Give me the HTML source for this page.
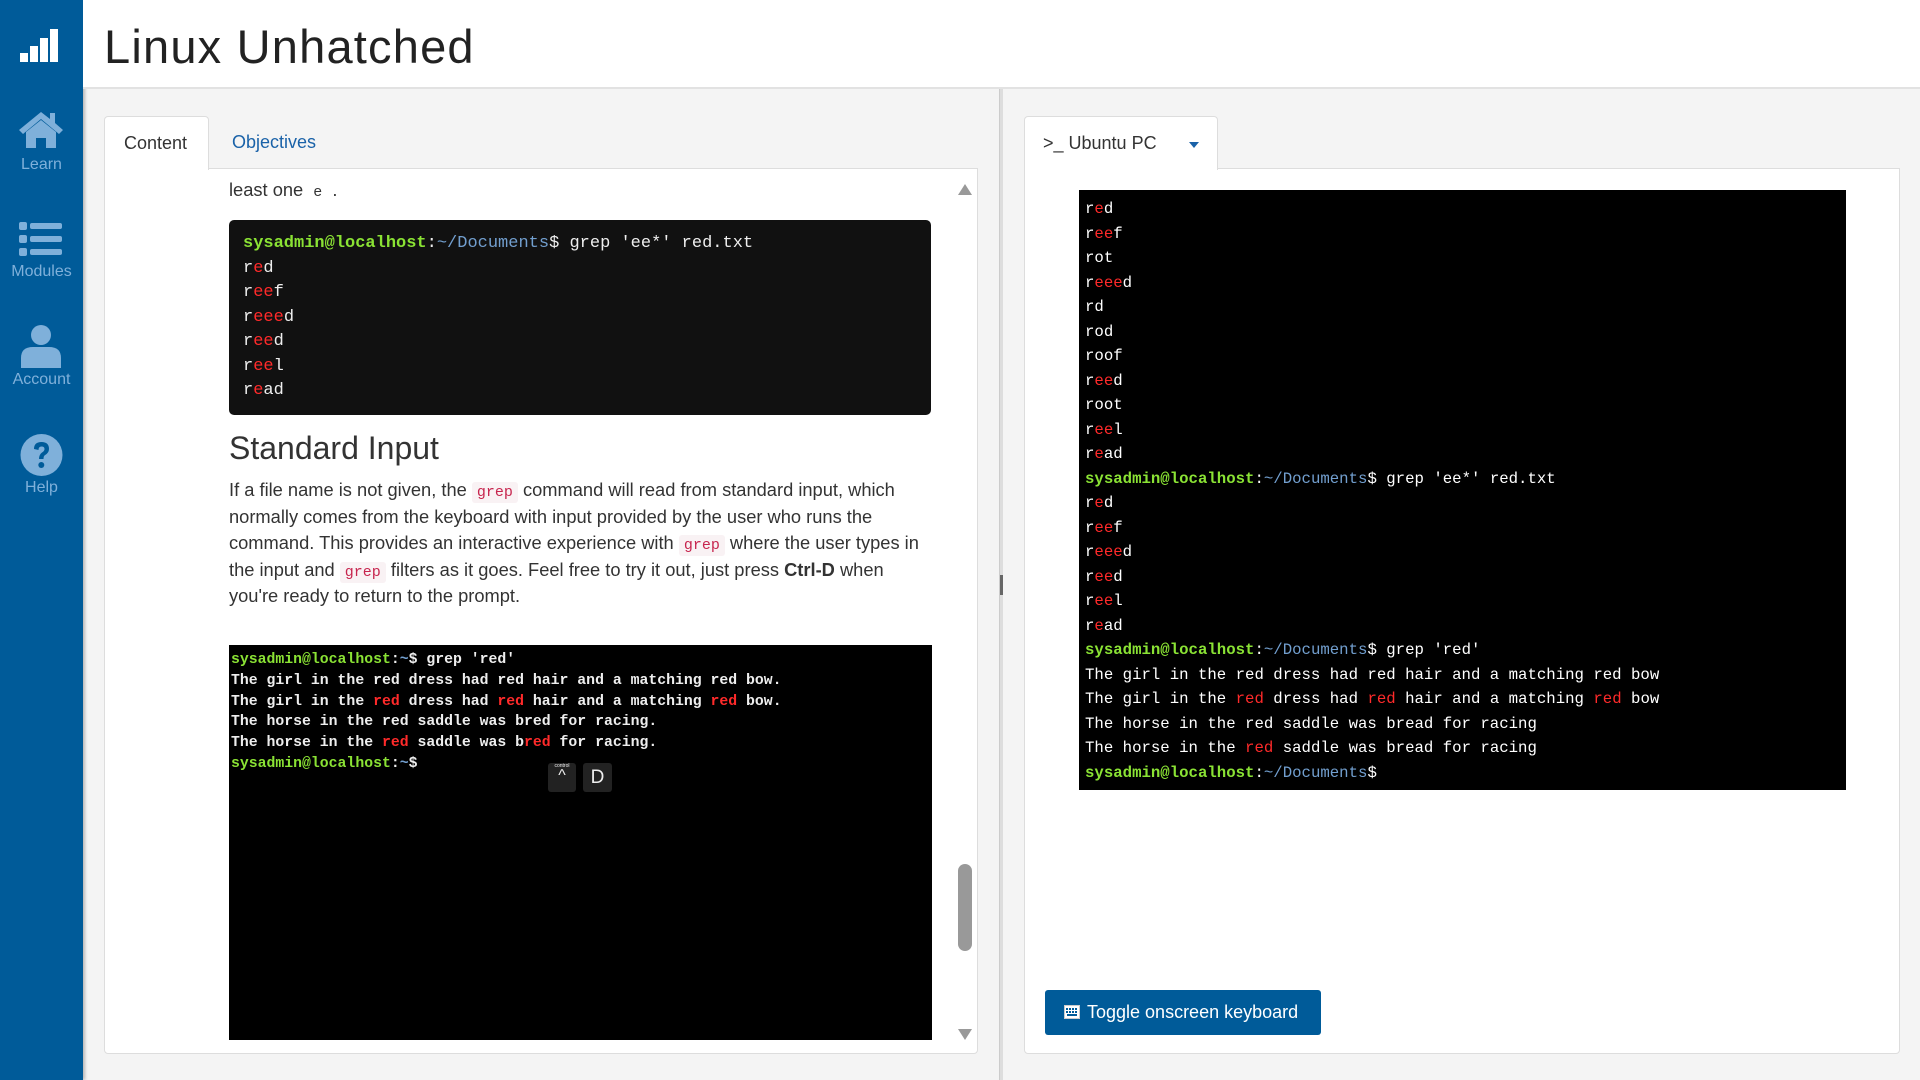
<!DOCTYPE html>
<html><head><meta charset="utf-8"><style>
*{box-sizing:border-box;margin:0;padding:0}
body{width:1920px;height:1080px;overflow:hidden;background:#f4f4f4;font-family:"Liberation Sans",sans-serif;position:relative}
.side{position:absolute;left:0;top:0;width:83px;height:1080px;background:#005b99;box-shadow:2px 0 3px rgba(0,0,0,.25)}
.side .lbl{position:absolute;left:0;width:83px;text-align:center;color:#7fb0da;font-size:16px}
.hdr{position:absolute;left:83px;top:0;right:0;height:89px;background:#fff;border-bottom:2px solid #e2e2e2}
.hdr h1{position:absolute;left:21px;top:19px;font-weight:normal;font-size:47px;color:#222;letter-spacing:1.2px}
.card{position:absolute;background:#fff;border:1px solid #ddd;border-radius:4px}
.tab{position:absolute;background:#fff;border:1px solid #ddd;border-bottom:none;border-radius:4px 4px 0 0;font-size:18px;color:#333}
.mono{font-family:"Liberation Mono",monospace}
.r{color:#ff2a2a}.g{color:#8ae234;font-weight:bold}.b{color:#729fcf}
p.t{font-size:18.3px;line-height:26.6px;color:#333}
code.i{font-family:"Liberation Mono",monospace;font-size:15px;line-height:1;color:#c7254e;background:#f9f2f4;padding:2px 5px;border-radius:3px}
</style></head><body>
<div class="side">
 <svg style="position:absolute;left:20px;top:29px" width="38" height="33"><rect x="0" y="24" width="8" height="9" fill="#fff"/><rect x="10" y="17" width="8" height="16" fill="#fff"/><rect x="20" y="9" width="8" height="24" fill="#fff"/><rect x="30" y="0" width="8" height="33" fill="#fff"/></svg>
 <svg style="position:absolute;left:17px;top:110px" width="48" height="38" viewBox="0 0 48 38"><path d="M24 2 L2 20 L6 24 L24 9 L42 24 L46 20 L38 13 L38 3 L33 3 L33 9 Z" fill="#7fb0da"/><path d="M9 22 L24 10 L39 22 L39 38 L29 38 L29 28 L19 28 L19 38 L9 38 Z" fill="#7fb0da"/></svg>
 <div class="lbl" style="top:156px">Learn</div>
 <svg style="position:absolute;left:19px;top:222px" width="43" height="34"><rect x="0" y="0" width="8" height="8" rx="2" fill="#7fb0da"/><rect x="11" y="1" width="32" height="6" rx="2" fill="#7fb0da"/><rect x="0" y="13" width="8" height="8" rx="2" fill="#7fb0da"/><rect x="11" y="14" width="32" height="6" rx="2" fill="#7fb0da"/><rect x="0" y="26" width="8" height="8" rx="2" fill="#7fb0da"/><rect x="11" y="27" width="32" height="6" rx="2" fill="#7fb0da"/></svg>
 <div class="lbl" style="top:263px">Modules</div>
 <svg style="position:absolute;left:21px;top:325px" width="40" height="43"><circle cx="20" cy="10" r="10" fill="#7fb0da"/><path d="M0 43 L0 33 Q0 22 12 22 L28 22 Q40 22 40 33 L40 43 Z" fill="#7fb0da"/></svg>
 <div class="lbl" style="top:371px">Account</div>
 <svg style="position:absolute;left:20px;top:433px" width="43" height="44"><circle cx="21.5" cy="22" r="21" fill="#7fb0da"/><path d="M14 16 Q14 9 21.5 9 Q29 9 29 16 Q29 20 24.5 22.5 Q23.5 23.5 23.5 26 L19 26 Q19 21.5 22 19.5 Q24.5 18 24.5 16 Q24.5 13.5 21.5 13.5 Q18.5 13.5 18.5 17 Z" fill="#005b99"/><circle cx="21.3" cy="32" r="3" fill="#005b99"/></svg>
 <div class="lbl" style="top:479px">Help</div>
</div>
<div class="hdr"><h1>Linux Unhatched</h1></div>
<div style="position:absolute;left:999px;top:89px;width:4px;height:991px;background:#ddd;border-left:1px solid #ccc"></div>
<div style="position:absolute;left:1000px;top:575px;width:3px;height:20px;background:#666"></div>

<!-- left panel -->
<div class="card" style="left:104px;top:168px;width:874px;height:886px;border-radius:0 0 4px 4px"></div>
<div class="tab" style="left:104px;top:116px;width:105px;height:54px"><span style="position:absolute;left:19px;top:16px">Content</span></div>
<div style="position:absolute;left:232px;top:132px;font-size:18px;color:#1a62a8">Objectives</div>
<div style="position:absolute;left:105px;top:170px;width:872px;height:882px;overflow:hidden">
 <p class="t" style="position:absolute;left:124px;top:7px">least one <code class="i" style="background:none;color:#333">e</code> .</p>
 <div class="mono" style="position:absolute;left:124px;top:50px;width:702px;height:195px;background:#111;border-radius:5px;color:#eee;font-size:17px;line-height:24.5px;padding:12px 0 0 14px">
  <div><span class="g">sysadmin@localhost</span>:<span class="b">~/Documents</span>$ grep 'ee*' red.txt</div>
  <div>r<span class="r">e</span>d</div><div>r<span class="r">ee</span>f</div><div>r<span class="r">eee</span>d</div><div>r<span class="r">ee</span>d</div><div>r<span class="r">ee</span>l</div><div>r<span class="r">e</span>ad</div>
 </div>
 <div style="position:absolute;left:124px;top:260px;font-size:32px;color:#333">Standard Input</div>
 <p class="t" style="position:absolute;left:124px;top:307px;width:706px">If a file name is not given, the <code class="i">grep</code> command will read from standard input, which normally comes from the keyboard with input provided by the user who runs the command. This provides an interactive experience with <code class="i">grep</code> where the user types in the input and <code class="i">grep</code> filters as it goes. Feel free to try it out, just press <b>Ctrl-D</b> when you're ready to return to the prompt.</p>
 <div class="mono" style="position:absolute;left:124px;top:475px;width:703px;height:395px;background:#000;color:#eee;font-size:14.8px;line-height:20.8px;padding:5px 0 0 2px;font-weight:bold">
  <div><span class="g">sysadmin@localhost</span>:<span class="b">~</span>$ grep 'red'</div>
  <div>The girl in the red dress had red hair and a matching red bow.</div>
  <div>The girl in the <span class="r">red</span> dress had <span class="r">red</span> hair and a matching <span class="r">red</span> bow.</div>
  <div>The horse in the red saddle was bred for racing.</div>
  <div>The horse in the <span class="r">red</span> saddle was b<span class="r">red</span> for racing.</div>
  <div><span class="g">sysadmin@localhost</span>:<span class="b">~</span>$</div>
  <div style="position:absolute;left:319px;top:118px;width:28px;height:29px;background:#222;border-radius:3px;color:#eee;text-align:center;font-family:'Liberation Sans';font-weight:normal"><span style="position:absolute;left:0;right:0;top:-7px;font-size:5px">control</span><span style="position:absolute;left:0;right:0;top:3px;font-size:16px">^</span></div>
  <div style="position:absolute;left:354px;top:118px;width:29px;height:29px;background:#222;border-radius:3px;color:#eee;text-align:center;font-family:'Liberation Sans';font-weight:normal;font-size:19px;line-height:29px">D</div>
 </div>
 <div style="position:absolute;left:853px;top:14px;width:0;height:0;border-left:7px solid transparent;border-right:7px solid transparent;border-bottom:11px solid #999"></div>
 <div style="position:absolute;left:853px;top:859px;width:0;height:0;border-left:7px solid transparent;border-right:7px solid transparent;border-top:11px solid #999"></div>
 <div style="position:absolute;left:853px;top:694px;width:14px;height:87px;background:#999;border-radius:7px"></div>
</div>

<!-- right panel -->
<div class="card" style="left:1024px;top:168px;width:876px;height:886px;border-radius:0 0 4px 4px"></div>
<div class="tab" style="left:1024px;top:116px;width:194px;height:54px"><span style="position:absolute;left:18px;top:16px">&gt;_ Ubuntu PC</span>
 <div style="position:absolute;left:164px;top:25px;width:0;height:0;border-left:5px solid transparent;border-right:5px solid transparent;border-top:6px solid #1a62a8"></div></div>
<div class="mono" style="position:absolute;left:1079px;top:190px;width:767px;height:600px;background:#000;color:#fff;font-size:15.7px;line-height:24.5px;padding:7px 0 0 6px">
 <div>r<span class="r">e</span>d</div><div>r<span class="r">ee</span>f</div><div>rot</div><div>r<span class="r">eee</span>d</div><div>rd</div><div>rod</div><div>roof</div><div>r<span class="r">ee</span>d</div><div>root</div><div>r<span class="r">ee</span>l</div><div>r<span class="r">e</span>ad</div>
 <div><span class="g">sysadmin@localhost</span>:<span class="b">~/Documents</span>$ grep 'ee*' red.txt</div>
 <div>r<span class="r">e</span>d</div><div>r<span class="r">ee</span>f</div><div>r<span class="r">eee</span>d</div><div>r<span class="r">ee</span>d</div><div>r<span class="r">ee</span>l</div><div>r<span class="r">e</span>ad</div>
 <div><span class="g">sysadmin@localhost</span>:<span class="b">~/Documents</span>$ grep 'red'</div>
 <div>The girl in the red dress had red hair and a matching red bow</div>
 <div>The girl in the <span class="r">red</span> dress had <span class="r">red</span> hair and a matching <span class="r">red</span> bow</div>
 <div>The horse in the red saddle was bread for racing</div>
 <div>The horse in the <span class="r">red</span> saddle was bread for racing</div>
 <div><span class="g">sysadmin@localhost</span>:<span class="b">~/Documents</span>$</div>
</div>
<div style="position:absolute;left:1045px;top:990px;width:276px;height:45px;background:#005b99;border-radius:3px;color:#fff;font-size:18px;line-height:45px;padding-left:42px">Toggle onscreen keyboard
 <svg style="position:absolute;left:19px;top:15px" width="16" height="14"><rect x="0.5" y="0.5" width="15" height="13" fill="#fff" stroke="#ccc"/><g fill="#005b99"><rect x="2" y="3" width="2" height="2"/><rect x="5" y="3" width="2" height="2"/><rect x="8" y="3" width="2" height="2"/><rect x="11" y="3" width="2" height="2"/><rect x="2" y="6" width="2" height="2"/><rect x="5" y="6" width="2" height="2"/><rect x="8" y="6" width="2" height="2"/><rect x="11" y="6" width="2" height="2"/><rect x="3" y="9" width="10" height="2"/></g></svg>
</div>
</body></html>
